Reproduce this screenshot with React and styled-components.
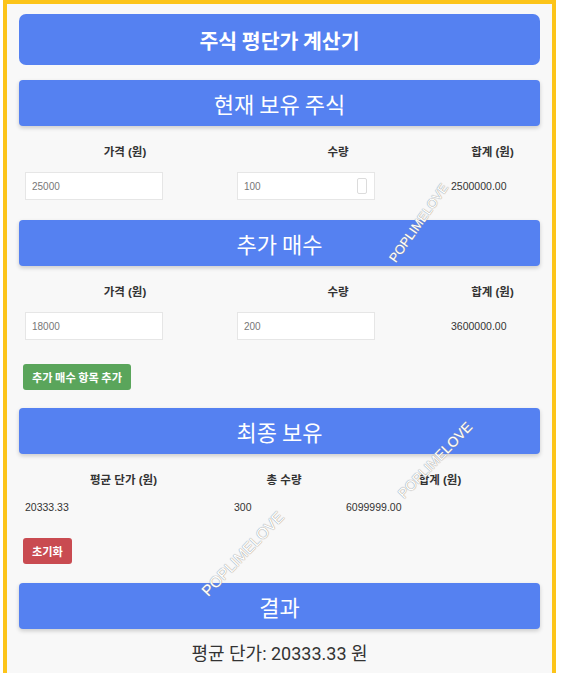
import React from "react";
import styled, { createGlobalStyle } from "styled-components";

const Global = createGlobalStyle`
  html, body { margin: 0; padding: 0; background: #ffffff; }
  body { font-family: "Liberation Sans", "Noto Sans CJK KR", sans-serif; color: #333; }
  * { box-sizing: border-box; }
`;

const Frame = styled.div`
  position: relative;
  margin-left: 3px;
  width: 553px;
  min-height: 673px;
  border: 4px solid #fcc419;
  background: #f8f8f8;
  padding: 10px 12px 8px;
  overflow: hidden;
`;

const TitleBar = styled.h1`
  margin: 0 0 15px;
  height: 51px;
  border-radius: 7px;
  background: #5581f1;
  color: #fff;
  display: flex;
  align-items: center;
  justify-content: center;
  font-family: "Noto Sans CJK KR", sans-serif;
  font-weight: 700;
  font-size: 20.5px;
`;

const SectionBar = styled.h2`
  margin: 0;
  height: 46px;
  border-radius: 4px;
  background: #5581f1;
  color: #fff;
  display: flex;
  align-items: center;
  justify-content: center;
  font-family: "Noto Sans CJK KR", sans-serif;
  font-weight: 400;
  font-size: 22px;
  box-shadow: 0 2px 4px rgba(0, 0, 0, 0.18);
`;

const Grid = styled.div`
  display: grid;
  grid-template-columns: ${(p) => p.$cols};
  margin: 12px 0 ${(p) => p.$after}px;
`;

const HeadCell = styled.div`
  padding: 7px 6px;
  line-height: 14px;
  text-align: center;
  font-weight: 700;
  font-size: 11.5px;
  color: #333;
`;

const Cell = styled.div`
  padding: 6px;
  display: flex;
  align-items: center;
  font-size: 10.5px;
  line-height: 14px;
  color: #333;
`;

const InputWrap = styled.div`
  position: relative;
  width: 138px;
  height: 28px;
`;

const Input = styled.input`
  width: 100%;
  height: 100%;
  border: 1px solid #e6e6e6;
  background: #fff;
  padding: 0 6px;
  font-family: "Liberation Sans", sans-serif;
  font-size: 10px;
  color: #777;
  outline: none;
`;

const Spinner = styled.span`
  position: absolute;
  right: 8px;
  top: 6px;
  width: 10px;
  height: 16px;
  border: 1px solid #dcdcdc;
  border-radius: 2px;
  background: #fff;
`;

const ActionButton = styled.button`
  display: block;
  margin: 0 0 ${(p) => p.$after}px 4px;
  height: 26px;
  padding: 0 9px;
  border: none;
  border-radius: 3px;
  background: ${(p) => p.$bg};
  color: #fff;
  font-family: "Noto Sans CJK KR", sans-serif;
  font-weight: 700;
  font-size: 11.2px;
  cursor: pointer;
`;

const ResultText = styled.p`
  margin: 13px 0 0;
  text-align: center;
  font-family: "Roboto", "Noto Sans CJK KR", sans-serif;
  font-size: 18px;
  line-height: 24px;
  color: #333;
`;

const Watermark = styled.span`
  position: absolute;
  left: ${(p) => p.$x}px;
  top: ${(p) => p.$y}px;
  width: 120px;
  height: 18px;
  line-height: 18px;
  text-align: center;
  font-family: "Liberation Sans", sans-serif;
  font-size: ${(p) => p.$size}px;
  color: #fff;
  text-shadow: 0 0 1px #999, 0 0 1px #999;
  transform: rotate(${(p) => p.$angle}deg);
  pointer-events: none;
  white-space: nowrap;
`;

function NumberField({ value, spinner }) {
  return (
    <InputWrap>
      <Input type="text" defaultValue={value} readOnly />
      {spinner && <Spinner />}
    </InputWrap>
  );
}

export default function App() {
  return (
    <>
      <Global />
      <Frame>
        <TitleBar>주식 평단가 계산기</TitleBar>

        <SectionBar>현재 보유 주식</SectionBar>
        <Grid $cols="212px 214px 1fr" $after={14}>
          <HeadCell>가격 (원)</HeadCell>
          <HeadCell>수량</HeadCell>
          <HeadCell>합계 (원)</HeadCell>
          <Cell><NumberField value="25000" /></Cell>
          <Cell><NumberField value="100" spinner /></Cell>
          <Cell>2500000.00</Cell>
        </Grid>

        <SectionBar>추가 매수</SectionBar>
        <Grid $cols="212px 214px 1fr" $after={18}>
          <HeadCell>가격 (원)</HeadCell>
          <HeadCell>수량</HeadCell>
          <HeadCell>합계 (원)</HeadCell>
          <Cell><NumberField value="18000" /></Cell>
          <Cell><NumberField value="200" /></Cell>
          <Cell>3600000.00</Cell>
        </Grid>
        <ActionButton $bg="#5aa55b" $after={18}>추가 매수 항목 추가</ActionButton>

        <SectionBar>최종 보유</SectionBar>
        <Grid $cols="209px 112px 1fr" $after={18}>
          <HeadCell>평균 단가 (원)</HeadCell>
          <HeadCell>총 수량</HeadCell>
          <HeadCell>합계 (원)</HeadCell>
          <Cell>20333.33</Cell>
          <Cell>300</Cell>
          <Cell>6099999.00</Cell>
        </Grid>
        <ActionButton $bg="#c94b51" $after={19}>초기화</ActionButton>

        <SectionBar>결과</SectionBar>
        <ResultText>평균 단가: 20333.33 원</ResultText>

        <Watermark $x={352} $y={210} $size={13} $angle={-55}>POPLIMELOVE</Watermark>
        <Watermark $x={368} $y={447} $size={14} $angle={-46}>POPLIMELOVE</Watermark>
        <Watermark $x={176} $y={541} $size={15.5} $angle={-46}>POPLIMELOVE</Watermark>
      </Frame>
    </>
  );
}
